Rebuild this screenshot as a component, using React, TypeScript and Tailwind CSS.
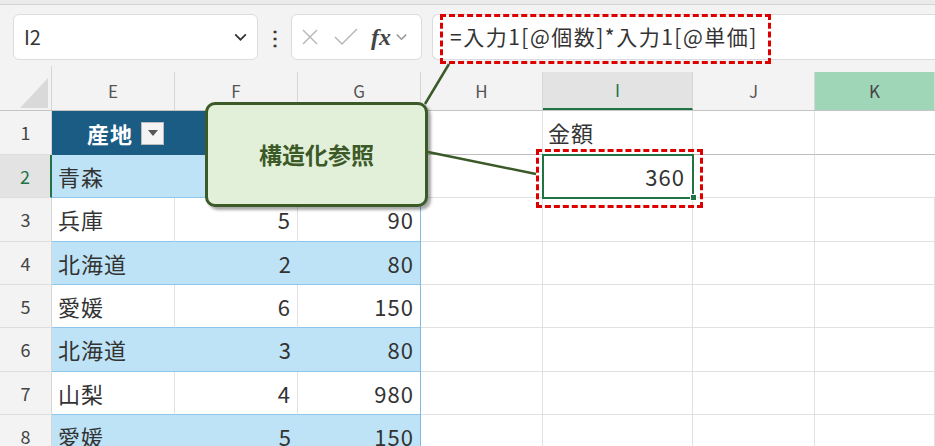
import React from "react";

const cols = ["E", "F", "G", "H", "I", "J", "K"];
const colW = ["w-[123px]", "w-[123px]", "w-[123px]", "w-[122px]", "w-[150px]", "w-[122px]", "w-[120px]"];
const rowH = ["h-[44px]", "h-[43px]", "h-[44px]", "h-[43px]", "h-[43px]", "h-[44px]", "h-[43px]", "h-[43px]"];

// row 2 values for F/G sit under the callout, so they stay empty
const data: [string, string, string][] = [
  ["青森", "", ""],
  ["兵庫", "5", "90"],
  ["北海道", "2", "80"],
  ["愛媛", "6", "150"],
  ["北海道", "3", "80"],
  ["山梨", "4", "980"],
  ["愛媛", "5", "150"],
];

function Chevron({ className }: { className?: string }) {
  return (
    <svg viewBox="0 0 16 16" className={className} fill="none" stroke="currentColor" strokeWidth="1.6">
      <path d="M3 6l5 5 5-5" />
    </svg>
  );
}

function FilterBtn() {
  return (
    <span className="ml-2 flex h-[23px] w-[23px] items-center justify-center border border-[#bdbdbd] bg-[#f4f4f4]">
      <svg viewBox="0 0 10 6" className="h-[6px] w-[10px]">
        <path d="M0 0h10L5 6z" fill="#555" />
      </svg>
    </span>
  );
}

function HeaderRow() {
  return (
    <div className="flex h-[45px] border-b border-[#c4c4c4]">
      <div className="relative w-[52px] border-r border-[#d6d6d6]">
        <svg viewBox="0 0 28 30" className="absolute left-[20px] top-[12px] h-[30px] w-[28px]">
          <path d="M28 0V30H0z" fill="#d9d9d9" />
        </svg>
      </div>
      {cols.map((c, i) => {
        const sel = c === "I";
        const k = c === "K";
        return (
          <div
            key={c}
            className={`${colW[i]} mt-[6px] flex items-center justify-center border-r border-[#d6d6d6] text-[17px] ${
              sel
                ? "border-b-2 border-b-[#217346] bg-[#e3e3e3] text-[#217346]"
                : k
                ? "bg-[#a0d6b8] text-[#444]"
                : "text-[#555]"
            }`}
          >
            {c}
          </div>
        );
      })}
    </div>
  );
}

function RowHead({ n, h }: { n: number; h: string }) {
  const sel = n === 2;
  return (
    <div
      className={`${h} flex w-[52px] items-center justify-center border-b border-[#dedede] text-[18px] ${
        sel ? "border-r-2 border-r-[#217346] bg-[#e3e3e3] text-[#217346]" : "border-r border-r-[#d6d6d6] bg-[#f3f3f3] text-[#444]"
      }`}
    >
      {n}
    </div>
  );
}

function EmptyCells({ h }: { h: string }) {
  return (
    <>
      {[3, 4, 5, 6].map((i) => (
        <div key={i} className={`${h} ${colW[i]} border-r border-b border-[#e1e1e1] bg-white`} />
      ))}
    </>
  );
}

export default function App() {
  return (
    <div className="relative h-[446px] w-[935px] overflow-hidden bg-[#f3f3f3] font-['Noto_Sans_CJK_JP','Noto_Sans',sans-serif] text-[#333]">
      <div className="h-[5px] border-b border-[#d4d4d4] bg-[#ebebeb]" />

      {/* formula bar */}
      <div className="mt-[8px] flex h-[47px] items-center">
        <div className="ml-[13px] flex h-[46px] w-[245px] items-center justify-between rounded-[6px] border border-[#dcdcdc] bg-white pl-[10px] pr-[8px] text-[20px]">
          <span>I2</span>
          <Chevron className="h-[17px] w-[17px] text-[#333]" />
        </div>
        <div className="flex w-[33px] items-center justify-center text-[20px] font-bold text-[#333]">⋮</div>
        <div className="flex h-[46px] w-[131px] items-center rounded-[6px] border border-[#dcdcdc] bg-white pl-[8px]">
          <svg viewBox="0 0 20 20" className="h-[20px] w-[20px]" stroke="#b5b5b5" strokeWidth="1.4">
            <path d="M3 3l14 14M17 3L3 17" />
          </svg>
          <svg viewBox="0 0 26 20" className="ml-[13px] h-[20px] w-[26px]" fill="none" stroke="#b5b5b5" strokeWidth="1.4">
            <path d="M2 10l7 7L24 2" />
          </svg>
          <span className="ml-[12px] font-['Liberation_Serif',serif] text-[24px] font-bold italic text-[#444]">fx</span>
          <Chevron className="ml-[3px] h-[15px] w-[15px] text-[#999]" />
        </div>
        <div className="ml-[10px] flex h-[46px] flex-1 items-center rounded-l-[6px] border border-r-0 border-[#dcdcdc] bg-white pl-[17px] text-[21px] tracking-[1.5px] text-[#333]">
          =入力1[@個数]*入力1[@単価]
        </div>
      </div>

      {/* sheet */}
      <div className="mt-[6px]">
        <HeaderRow />

        {/* row 1 */}
        <div className="flex">
          <RowHead n={1} h={rowH[0]} />
          <div className={`${rowH[0]} ${colW[0]} flex items-center justify-center bg-[#1b5c85] pl-[24px] text-[22px] font-bold tracking-[1px] text-white`}>
            産地
            <FilterBtn />
          </div>
          <div className={`${rowH[0]} ${colW[1]} bg-[#1b5c85]`} />
          <div className={`${rowH[0]} ${colW[2]} border-r border-[#7dbbe3] bg-[#1b5c85]`} />
          <div className={`${rowH[0]} ${colW[3]} border-r border-b border-[#e1e1e1] border-b-[#bdbdbd] bg-white`} />
          <div className={`${rowH[0]} ${colW[4]} flex items-center border-r border-b border-[#e1e1e1] border-b-[#bdbdbd] bg-white pl-[5px] text-[22px] tracking-[1px]`}>
            金額
          </div>
          <div className={`${rowH[0]} ${colW[5]} border-r border-b border-[#e1e1e1] border-b-[#bdbdbd] bg-white`} />
          <div className={`${rowH[0]} ${colW[6]} border-b border-[#bdbdbd] bg-white`} />
        </div>

        {data.map((r, idx) => {
          const n = idx + 2;
          const h = rowH[idx + 1];
          const band = n % 2 === 0;
          const bg = band ? "bg-[#bee3f6]" : "bg-white";
          return (
            <div key={n} className="flex">
              <RowHead n={n} h={h} />
              <div className={`${h} ${colW[0]} ${bg} flex items-center border-b border-b-[#8cc6ea] pl-[6px] text-[22px] tracking-[1px] ${band ? "" : "border-r border-r-[#e1e1e1]"}`}>
                {r[0]}
              </div>
              <div className={`${h} ${colW[1]} ${bg} flex items-center justify-end border-b border-b-[#8cc6ea] pr-[6px] text-[22px] tracking-[1px] ${band ? "" : "border-r border-r-[#e1e1e1]"}`}>
                {r[1]}
              </div>
              <div className={`${h} ${colW[2]} ${bg} flex items-center justify-end border-r border-b border-r-[#7dbbe3] border-b-[#8cc6ea] pr-[6px] text-[22px] tracking-[1px]`}>
                {r[2]}
              </div>
              {n === 2 ? (
                <>
                  <div className={`${h} ${colW[3]} border-r border-b border-[#e1e1e1] bg-white`} />
                  <div className={`${h} ${colW[4]} relative flex items-center justify-end border-b border-[#e1e1e1] bg-white pr-[8px] text-[22px] tracking-[1px] outline-2 -outline-offset-1 outline-[#217346]`}>
                    360
                    <span className="absolute -bottom-[4px] -right-[4px] h-[7px] w-[7px] border border-white bg-[#217346]" />
                  </div>
                  <div className={`${h} ${colW[5]} border-r border-b border-[#e1e1e1] bg-white`} />
                  <div className={`${h} ${colW[6]} border-b border-[#e1e1e1] bg-white`} />
                </>
              ) : (
                <EmptyCells h={h} />
              )}
            </div>
          );
        })}
      </div>

      {/* callout */}
      <div className="absolute left-[205px] top-[102px] flex h-[105px] w-[223px] items-center justify-center rounded-[10px] border-[3px] border-[#3b5a28] bg-[#e2efd9] text-[23px] font-bold text-[#3b5a28] shadow-[3px_3px_3px_rgba(0,0,0,0.35)]">
        構造化参照
      </div>

      {/* connector lines */}
      <svg className="pointer-events-none absolute left-0 top-0 h-[446px] w-[935px]" viewBox="0 0 935 446">
        <path d="M425 104L449 64" stroke="#3b5a28" strokeWidth="2.5" />
        <path d="M428 152L536 174" stroke="#3b5a28" strokeWidth="2.5" />
      </svg>

      {/* red dashed highlights */}
      <div className="absolute left-[440px] top-[14px] h-[50px] w-[331px] border-[3px] border-dashed border-[#dd0000]" />
      <div className="absolute left-[536px] top-[149px] h-[59px] w-[167px] border-[3px] border-dashed border-[#dd0000]" />
    </div>
  );
}
